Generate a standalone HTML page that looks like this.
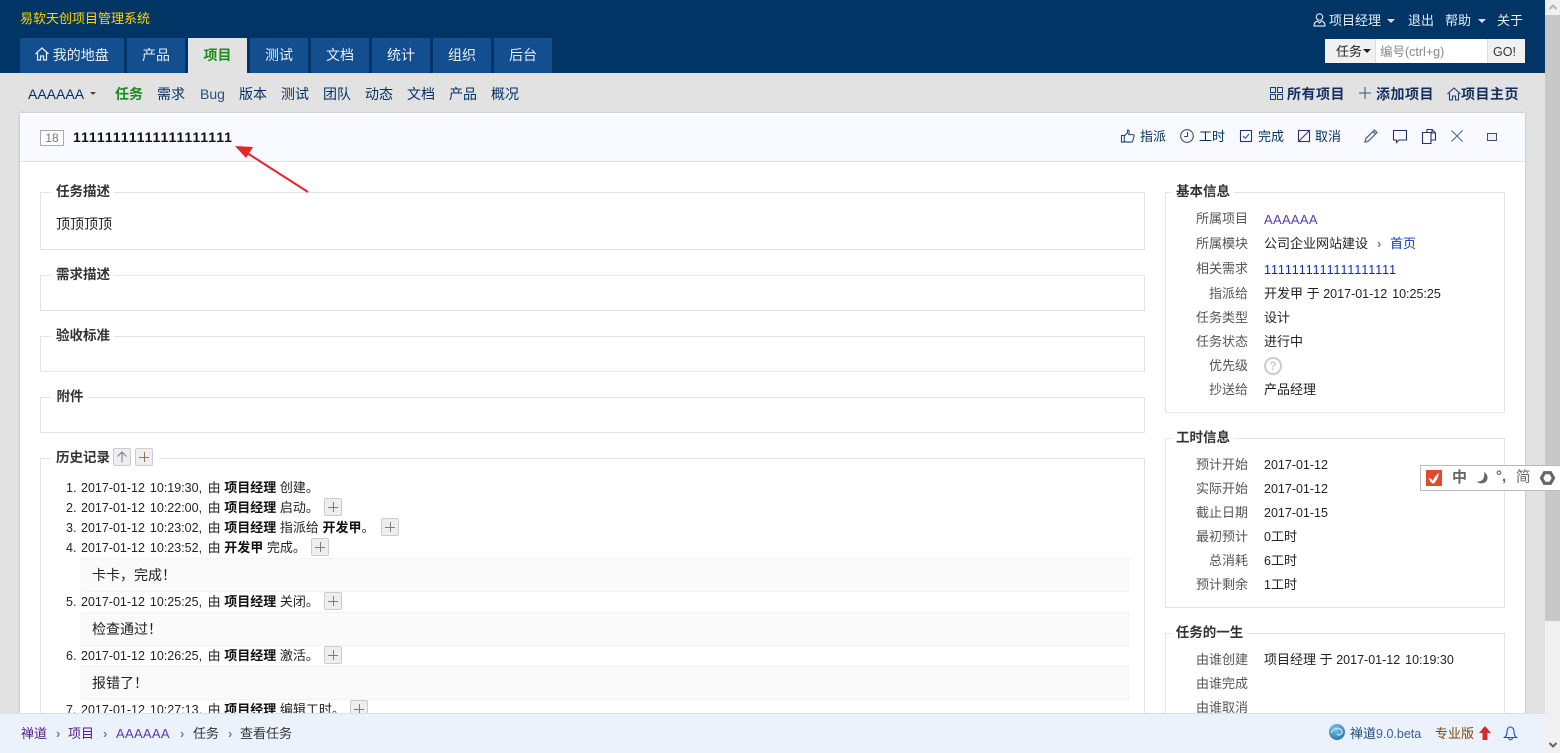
<!DOCTYPE html>
<html lang="zh"><head><meta charset="utf-8"><title>查看任务</title>
<style>
html,body{margin:0;padding:0;width:1560px;height:753px;overflow:hidden;background:#e2e2e2}
body{position:relative;font:13px/20px "Liberation Sans","Noto Sans CJK SC",sans-serif;color:#222;font-kerning:none}
.a,.t,.tab,.fs,.lg,.b,.q,svg{position:absolute}
.t{white-space:nowrap;height:20px;line-height:20px;margin-top:1px}
.d{font-size:12.5px;word-spacing:1.5px}
.hd{position:absolute;left:0;top:0;width:1545px;height:73px;background:#003566}
.tab{top:38px;height:35px;line-height:35px;background:#134f8f;color:#e8eef6;font-size:14px;text-align:center}
.tab.on{background:#e2e2e2;color:#1f8a1f;font-weight:bold}
.w{color:#e8eef6}
.n{font-size:14px;color:#03305f}
.nb{font-size:14px;font-weight:bold;color:#12305f;letter-spacing:.5px}
.ac{color:#03305f;font-size:13px}
.fs{border:1px solid #e3e3e3;box-sizing:border-box;background:#fff}
.lg{background:#fff;height:20px;line-height:20px;font-weight:bold;color:#333;text-align:center;white-space:nowrap;font-size:13.5px;margin-top:2px;text-indent:1px}
.l{text-align:right;color:#555;width:70px;left:1178px;margin-top:2px}
.v{left:1264px;color:#222;margin-top:2px}
.b{width:18px;height:18px;box-sizing:border-box;border:1px solid #ccc;border-radius:2px;background:#eee}
.b:before{content:"";position:absolute;left:3px;top:7.5px;width:10px;height:1px;background:#6f7f90}
.b:after{content:"";position:absolute;left:7.5px;top:3px;width:1px;height:10px;background:#8a7a60}
.b.up:before,.b.up:after{display:none}
.q{left:81px;width:1048px;height:34px;box-sizing:border-box;background:#fafafa;border:1px solid #f3f3f3;line-height:32px;padding-left:10px;font-size:14px;color:#222}
.li{left:66px;color:#222}
.li i{font-style:normal;display:inline-block;width:13px;text-align:left}
.li .d{margin-right:2px}
.li b{color:#111}
.sep{color:#5b87a8;font-size:13px;font-weight:bold}
.bc{color:#333}
.pu{color:#551a8b}
svg{overflow:visible}
</style></head><body>
<div class="hd"></div>
<div class="t" style="left:20px;top:8px;color:#ffd400">易软天创项目管理系统</div>

<svg style="left:1313px;top:13px" width="13" height="14" viewBox="0 0 13 14" fill="none" stroke="#cfe0f2" stroke-width="1.2"><circle cx="6.5" cy="4" r="3.2"/><path d="M1 13c0-3 1.5-4.5 3.5-5l2 2 2-2c2 .5 3.5 2 3.5 5z"/></svg>
<div class="t w" style="left:1329px;top:10px">项目经理</div>
<div class="a" style="left:1387px;top:19px;border:4px solid transparent;border-top-color:#dde;border-bottom:0"></div>
<div class="t w" style="left:1408px;top:10px">退出</div>
<div class="t w" style="left:1445px;top:10px">帮助</div>
<div class="a" style="left:1478px;top:19px;border:4px solid transparent;border-top-color:#dde;border-bottom:0"></div>
<div class="t w" style="left:1497px;top:10px">关于</div>

<div class="a" style="left:1325px;top:39px;width:50px;height:24px;background:#f1f1f1"></div>
<div class="t" style="left:1336px;top:41px;color:#222">任务</div>
<div class="a" style="left:1363px;top:49px;border:4px solid transparent;border-top-color:#222;border-bottom:0"></div>
<div class="a" style="left:1375px;top:39px;width:111px;height:24px;background:#fff;border-left:1px solid #ddd;border-right:1px solid #ddd"></div>
<div class="t" style="left:1380px;top:41px;color:#888;font-size:12.5px">编号(ctrl+g)</div>
<div class="a" style="left:1488px;top:39px;width:37px;height:24px;background:#f1f1f1"></div>
<div class="t" style="left:1493px;top:41px;color:#333;font-size:12.5px">GO!</div>

<div class="tab" style="left:20px;width:104px;text-indent:2px">&nbsp;&nbsp;&nbsp;&nbsp;我的地盘</div>
<svg style="left:35px;top:47px" width="14" height="14" viewBox="0 0 14 14" fill="none" stroke="#e8eef6" stroke-width="1.2"><path d="M.5 7 7 1l6.500 6M2.500 6v7h3V9h3v4h3V6"/></svg>
<div class="tab" style="left:127px;width:58px">产品</div>
<div class="tab on" style="left:188px;width:59px">项目</div>
<div class="tab" style="left:250px;width:58px">测试</div>
<div class="tab" style="left:311px;width:58px">文档</div>
<div class="tab" style="left:372px;width:58px">统计</div>
<div class="tab" style="left:433px;width:58px">组织</div>
<div class="tab" style="left:494px;width:58px">后台</div>

<div class="t n" style="left:28px;top:83px">AAAAAA</div>
<div class="a" style="left:90px;top:92px;border:3px solid transparent;border-top-color:#444;border-bottom:0"></div>
<div class="t n" style="left:115px;top:83px;color:#1f8a1f;font-weight:bold">任务</div>
<div class="t n" style="left:157px;top:83px">需求</div>
<div class="t n" style="left:200px;top:83px;color:#2b4f7f">Bug</div>
<div class="t n" style="left:239px;top:83px">版本</div>
<div class="t n" style="left:281px;top:83px">测试</div>
<div class="t n" style="left:323px;top:83px">团队</div>
<div class="t n" style="left:365px;top:83px">动态</div>
<div class="t n" style="left:407px;top:83px">文档</div>
<div class="t n" style="left:449px;top:83px">产品</div>
<div class="t n" style="left:491px;top:83px">概况</div>

<svg style="left:1270px;top:87px" width="13" height="13" viewBox="0 0 13 13" fill="none" stroke="#1d3f73"><rect x=".5" y=".5" width="5" height="5"/><rect x="7.500" y=".5" width="5" height="5"/><rect x=".5" y="7.500" width="5" height="5"/><rect x="7.500" y="7.500" width="5" height="5"/></svg>
<div class="t nb" style="left:1287px;top:83px">所有项目</div>
<svg style="left:1359px;top:87px" width="12" height="12" viewBox="0 0 12 12" stroke="#3a5070"><path d="M6 0v12M0 6h12"/></svg>
<div class="t nb" style="left:1376px;top:83px">添加项目</div>
<svg style="left:1447px;top:87px" width="14" height="14" viewBox="0 0 14 14" fill="none" stroke="#1d3f73" stroke-width="1.100"><path d="M.5 7 7 1l6.500 6M2.500 6v7h3V9h3v4h3V6"/></svg>
<div class="t nb" style="left:1461px;top:83px">项目主页</div>

<!-- scrollbar -->
<div class="a" style="left:1545px;top:0;width:15px;height:753px;background:#f0f0f0"></div>
<div class="a" style="left:1545px;top:15px;width:15px;height:606px;background:#c8c8c8"></div>
<svg style="left:1549px;top:4px" width="8" height="6" viewBox="0 0 8 6" fill="none" stroke="#b5b5b5" stroke-width="2"><path d="M.5 5 4 1.500 7.500 5"/></svg>
<svg style="left:1549px;top:742px" width="8" height="6" viewBox="0 0 8 6" fill="none" stroke="#606060" stroke-width="2"><path d="M.5 1 4 4.500 7.500 1"/></svg>

<!-- card -->
<div class="a" style="left:20px;top:113px;width:1505px;height:640px;background:#fff;box-shadow:0 0 2px rgba(0,0,0,.25)"></div>
<div class="a" style="left:20px;top:114px;width:1505px;height:47px;background:#f8faff;border-bottom:1px solid #e3e3e3"></div>
<div class="a" style="left:40px;top:130px;width:22px;height:14px;border:1px solid #aaa;background:#fff;color:#777;font-size:12px;line-height:14px;text-align:center">18</div>
<div class="t" style="left:73px;top:126px;font-size:14px;font-weight:bold;color:#111;letter-spacing:.17px">11111111111111111111</div>

<svg style="left:1121px;top:129px" width="14" height="14" viewBox="0 0 15 15" fill="none" stroke="#1d3f73" stroke-width="1.100"><path d="M.5 7h3v7h-3zM3.500 7.500 7 4V1.200c1.500-.5 2 .8 1.800 2L8.300 6H13c1.300 0 1.400 1.300.9 2l-1.400 5c-.2.600-.6 1-1.300 1H5.500l-2-1"/></svg>
<div class="t ac" style="left:1140px;top:126px">指派</div>
<svg style="left:1180px;top:129px" width="14" height="14" viewBox="0 0 14 14" fill="none" stroke="#3d4f66" stroke-width="1.100"><circle cx="7" cy="7" r="6.300"/><path d="M7.500 3v4.500H4"/></svg>
<div class="t ac" style="left:1199px;top:126px">工时</div>
<svg style="left:1240px;top:130px" width="12" height="12" viewBox="0 0 12 12" fill="none" stroke="#3c2f70" stroke-width="1.100"><rect x=".5" y=".5" width="11" height="11"/><path d="M3 6l2.300 2.300L9 4" stroke="#1d5f73"/></svg>
<div class="t ac" style="left:1258px;top:126px">完成</div>
<svg style="left:1298px;top:130px" width="12" height="12" viewBox="0 0 12 12" fill="none" stroke="#3c2f70" stroke-width="1.100"><rect x=".5" y=".5" width="11" height="11"/><path d="M1 11 11 1" stroke="#1d3f73"/></svg>
<div class="t ac" style="left:1315px;top:126px">取消</div>
<svg style="left:1364px;top:129px" width="14" height="14" viewBox="0 0 14 14" fill="none" stroke="#4a6a90" stroke-width="1.300"><path d="M1 13l.8-3.500L10.500 1l2.500 2.500-8.700 8.700zM9 2.500 11.500 5"/></svg>
<svg style="left:1393px;top:130px" width="14" height="14" viewBox="0 0 14 14" fill="none" stroke="#1d3566" stroke-width="1.100"><path d="M.5.5h13v9.500H6l-2.500 2.500V10h-3z"/></svg>
<svg style="left:1422px;top:129px" width="14" height="15" viewBox="0 0 14 15" fill="none" stroke="#2d2f70" stroke-width="1.100"><path d="M.5 3.500h8.500v11H.5zM5 3.500V.5h5l3.500 3.500v7H9M10 .5V4h3.500"/></svg>
<svg style="left:1451px;top:130px" width="12" height="12" viewBox="0 0 12 12" stroke="#4a6a90" stroke-width="1.100"><path d="M.5.500l11 11M11.500.500l-11 11"/></svg>
<div class="a" style="left:1487px;top:133px;width:8px;height:6px;border:1px solid #35507a;background:#eef1f7"></div>

<!-- left fieldsets -->
<div class="fs" style="left:40px;top:192px;width:1105px;height:58px"></div>
<div class="lg" style="left:51px;top:180px;width:63px">任务描述</div>
<div class="t" style="left:56px;top:213px;color:#222;font-size:14px">顶顶顶顶</div>
<div class="fs" style="left:40px;top:275px;width:1105px;height:36px"></div>
<div class="lg" style="left:51px;top:263px;width:63px">需求描述</div>
<div class="fs" style="left:40px;top:336px;width:1105px;height:36px"></div>
<div class="lg" style="left:51px;top:324px;width:63px">验收标准</div>
<div class="fs" style="left:40px;top:397px;width:1105px;height:36px"></div>
<div class="lg" style="left:51px;top:385px;width:37px">附件</div>

<div class="fs" style="left:40px;top:458px;width:1105px;height:295px"></div>
<div class="lg" style="left:51px;top:446px;width:108px;text-align:left;text-indent:5px">历史记录</div>
<div class="b up" style="left:113px;top:448px"></div>
<svg style="left:116px;top:451px" width="12" height="12" viewBox="0 0 12 12" fill="none" stroke="#6f7f90"><path d="M6 11.500V1M1.500 5.500 6 1l4.500 4.500"/></svg>
<div class="b" style="left:135px;top:448px"></div>

<div class="t li" style="top:477px"><i class="d">1.</i><span class="d">2017-01-12 10:19:30,</span> 由 <b>项目经理</b> 创建。</div>
<div class="t li" style="top:497px"><i class="d">2.</i><span class="d">2017-01-12 10:22:00,</span> 由 <b>项目经理</b> 启动。</div>
<div class="b" style="left:324px;top:498px"></div>
<div class="t li" style="top:517px"><i class="d">3.</i><span class="d">2017-01-12 10:23:02,</span> 由 <b>项目经理</b> 指派给 <b>开发甲</b>。</div>
<div class="b" style="left:381px;top:518px"></div>
<div class="t li" style="top:537px"><i class="d">4.</i><span class="d">2017-01-12 10:23:52,</span> 由 <b>开发甲</b> 完成。</div>
<div class="b" style="left:311px;top:538px"></div>
<div class="q" style="top:558px">卡卡，完成！</div>
<div class="t li" style="top:591px"><i class="d">5.</i><span class="d">2017-01-12 10:25:25,</span> 由 <b>项目经理</b> 关闭。</div>
<div class="b" style="left:324px;top:592px"></div>
<div class="q" style="top:612px">检查通过！</div>
<div class="t li" style="top:645px"><i class="d">6.</i><span class="d">2017-01-12 10:26:25,</span> 由 <b>项目经理</b> 激活。</div>
<div class="b" style="left:324px;top:646px"></div>
<div class="q" style="top:666px">报错了！</div>
<div class="t li" style="top:699px"><i class="d">7.</i><span class="d">2017-01-12 10:27:13,</span> 由 <b>项目经理</b> 编辑工时。</div>
<div class="b" style="left:350px;top:700px"></div>

<!-- right panels -->
<div class="fs" style="left:1165px;top:192px;width:340px;height:221px"></div>
<div class="lg" style="left:1171px;top:180px;width:63px">基本信息</div>
<div class="t l" style="top:207px">所属项目</div><div class="t v" style="top:208px;color:#5a3aa8;letter-spacing:.3px">AAAAAA</div>
<div class="t l" style="top:232px">所属模块</div><div class="t v" style="top:232px">公司企业网站建设</div><div class="t sep" style="left:1377px;top:233px">›</div><div class="t" style="left:1390px;top:233px;color:#0a3cc8">首页</div>
<div class="t l" style="top:257px">相关需求</div><div class="t v d" style="top:258px;color:#0a28c8">1111111111111111111</div>
<div class="t l" style="top:282px">指派给</div><div class="t v" style="top:282px">开发甲 于 <span class="d">2017-01-12 10:25:25</span></div>
<div class="t l" style="top:306px">任务类型</div><div class="t v" style="top:306px">设计</div>
<div class="t l" style="top:330px">任务状态</div><div class="t v" style="top:330px">进行中</div>
<div class="t l" style="top:354px">优先级</div>
<div class="a" style="left:1264px;top:357px;width:14px;height:14px;border:2px solid #ccc;border-radius:50%;color:#ccc;font-size:12px;font-weight:bold;line-height:14px;text-align:center">?</div>
<div class="t l" style="top:378px">抄送给</div><div class="t v" style="top:378px">产品经理</div>

<div class="fs" style="left:1165px;top:438px;width:340px;height:170px"></div>
<div class="lg" style="left:1171px;top:426px;width:63px">工时信息</div>
<div class="t l" style="top:453px">预计开始</div><div class="t v d" style="top:453px">2017-01-12</div>
<div class="t l" style="top:477px">实际开始</div><div class="t v d" style="top:477px">2017-01-12</div>
<div class="t l" style="top:501px">截止日期</div><div class="t v d" style="top:501px">2017-01-15</div>
<div class="t l" style="top:525px">最初预计</div><div class="t v" style="top:525px"><span class="d">0</span>工时</div>
<div class="t l" style="top:549px">总消耗</div><div class="t v" style="top:549px"><span class="d">6</span>工时</div>
<div class="t l" style="top:573px">预计剩余</div><div class="t v" style="top:573px"><span class="d">1</span>工时</div>

<div class="fs" style="left:1165px;top:633px;width:340px;height:120px"></div>
<div class="lg" style="left:1171px;top:621px;width:76px">任务的一生</div>
<div class="t l" style="top:648px">由谁创建</div><div class="t v" style="top:648px">项目经理 于 <span class="d">2017-01-12 10:19:30</span></div>
<div class="t l" style="top:672px">由谁完成</div>
<div class="t l" style="top:696px">由谁取消</div>

<!-- red annotation arrow -->
<svg style="left:0;top:0" width="1560" height="753" viewBox="0 0 1560 753"><path d="M308 192 247 153" stroke="#ea2329" stroke-width="2" fill="none"/><path d="M235 146l18 1-7 11z" fill="#ea2329"/></svg>

<!-- IME -->
<div class="a" style="left:1420px;top:465px;width:140px;height:26px;box-sizing:border-box;background:#fff;border:1px solid #bbb;border-right:0"></div>
<div class="a" style="left:1426px;top:470px;width:16px;height:16px;background:#e04a32"></div>
<svg style="left:1426px;top:470px" width="16" height="16" viewBox="0 0 16 16" fill="#fff"><path d="M2.500 8c2 .2 3.800 1.300 4.500 3 .8-3 3-6 6-8-.8 4-2.500 8-5 10.500-2 .3-4-2-5.500-5.500z"/></svg>
<div class="t" style="left:1452px;top:467px;font-size:15px;color:#666;font-weight:bold">中</div>
<svg style="left:1476px;top:472px" width="12" height="12" viewBox="0 0 12 12" fill="#666"><path d="M8 0c3.500 2 4.500 6 2.500 9C8.500 12 3 12 .5 9.500c3 .5 5.500-.5 7-3 .8-2 1-4.500.5-6.500z"/></svg>
<div class="t" style="left:1496px;top:466px;font-size:15px;color:#666;font-weight:bold">°,</div>
<div class="t" style="left:1516px;top:467px;font-size:14.5px;color:#666">简</div>
<svg style="left:1540px;top:471px" width="15" height="14" viewBox="0 0 15 14" fill="none" stroke="#666" stroke-width="3.200"><path d="M4.500 1.700h6l3 5.300-3 5.300h-6L1.500 7z"/></svg>

<!-- footer -->
<div class="a" style="left:0;top:713px;width:1545px;height:40px;background:#ebf2fc;border-top:1px solid #dcdfe4;box-sizing:border-box"></div>
<div class="t pu" style="left:21px;top:723px">禅道</div>
<div class="t sep" style="left:56px;top:723px">›</div>
<div class="t pu" style="left:68px;top:723px">项目</div>
<div class="t sep" style="left:103px;top:723px">›</div>
<div class="t" style="left:116px;top:723px;color:#5a3aa8;letter-spacing:.3px">AAAAAA</div>
<div class="t sep" style="left:180px;top:723px">›</div>
<div class="t bc" style="left:193px;top:723px">任务</div>
<div class="t sep" style="left:228px;top:723px">›</div>
<div class="t bc" style="left:240px;top:723px">查看任务</div>
<svg style="left:1329px;top:724px" width="16" height="16" viewBox="0 0 16 16"><defs><radialGradient id="g" cx=".4" cy=".3" r=".8"><stop offset="0" stop-color="#7cc8e6"/><stop offset="1" stop-color="#1f6fa8"/></radialGradient></defs><circle cx="8" cy="8" r="8" fill="url(#g)"/><path d="M2 9c2-5 9-6 11-2 1 3-3 5-5 3" fill="none" stroke="#b8dff0" stroke-width="1.400"/></svg>
<div class="t" style="left:1350px;top:723px;color:#1a4a80">禅道<span class="d" style="color:#3a5f95">9.0.beta</span></div>
<div class="t" style="left:1435px;top:723px;color:#7a4a10">专业版</div>
<svg style="left:1479px;top:726px" width="12" height="14" viewBox="0 0 12 14" fill="#d42a2a"><path d="M6 0l6 7H8.500v7h-5V7H0z"/></svg>
<svg style="left:1504px;top:726px" width="13" height="14" viewBox="0 0 13 14" fill="none" stroke="#2244dd" stroke-width="1.100"><path d="M.5 11.500c2-1.500 2.500-3.500 2.500-6S4.500 1 6.500 1 10 3 10 5.500s.5 4.500 2.500 6zM4.500 11.500c0 3 4 3 4 0"/></svg>
</body></html>
